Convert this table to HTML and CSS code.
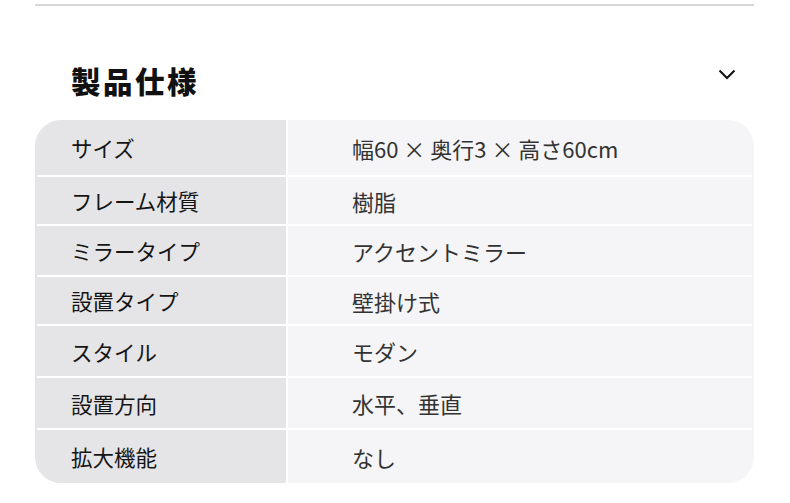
FILE: index.html
```html
<!DOCTYPE html>
<html lang="ja">
<head>
<meta charset="utf-8">
<link rel="stylesheet" href="styles.css">
</head>
<body>
<div class="page">
  <div class="rule"></div>
  <div class="head">
    <h2 class="title">製品仕様</h2>
    <svg class="chev" width="18" height="11" viewBox="0 0 18 11"><path d="M1.5 1.5 L9 9 L16.5 1.5" fill="none" stroke="#111" stroke-width="2"/></svg>
  </div>
  <div class="spec">
    <div class="row r1"><div class="k">サイズ</div><div class="v">幅60 × 奥行3 × 高さ60cm</div></div>
    <div class="row r2"><div class="k">フレーム材質</div><div class="v">樹脂</div></div>
    <div class="row r3"><div class="k">ミラータイプ</div><div class="v">アクセントミラー</div></div>
    <div class="row r4"><div class="k">設置タイプ</div><div class="v">壁掛け式</div></div>
    <div class="row r5"><div class="k">スタイル</div><div class="v">モダン</div></div>
    <div class="row r6"><div class="k">設置方向</div><div class="v">水平、垂直</div></div>
    <div class="row r7"><div class="k">拡大機能</div><div class="v">なし</div></div>
  </div>
</div>
</body>
</html>
```

FILE: styles.css
```css
* { box-sizing: border-box; }
html, body { margin: 0; padding: 0; background: #fff; }
body { font-family: "Noto Sans CJK JP", "Noto Sans", sans-serif; color: #1b1b1b; }
.page { width: 719px; margin-left: 35px; padding-top: 4px; }
.rule { height: 2px; background: #d6d6d6; }
.head { height: 114px; display: flex; align-items: center; justify-content: space-between; padding: 40px 18px 6px 36px; }
.title { margin: 0; font-size: 29.5px; font-weight: 900; letter-spacing: 2.5px; line-height: 28px; color: #111; }
.chev { display: block; position: relative; top: -6px; }
.spec { border-radius: 26px; overflow: hidden; border-left: 2px solid #e5e5e8; border-right: 2px solid #f5f5f7; background: #f5f5f7; }
.row { display: flex; height: 50px; border-bottom: 2px solid #fff; }
.row:last-child { border-bottom: 0; }
.r1 { height: 57px; }
.r2 { height: 49px; }
.r3 { height: 51px; }
.r4 { height: 49px; }
.r5 { height: 52px; }
.r6 { height: 52px; }
.r7 { height: 53px; }
.k { width: 251px; flex: none; background: #e5e5e8; border-right: 2px solid #fff; display: flex; align-items: center; padding-left: 34px; font-size: 21.5px; color: #151515; }
.v { flex: 1; display: flex; align-items: center; padding-left: 64px; font-size: 22px; color: #333; }
```
